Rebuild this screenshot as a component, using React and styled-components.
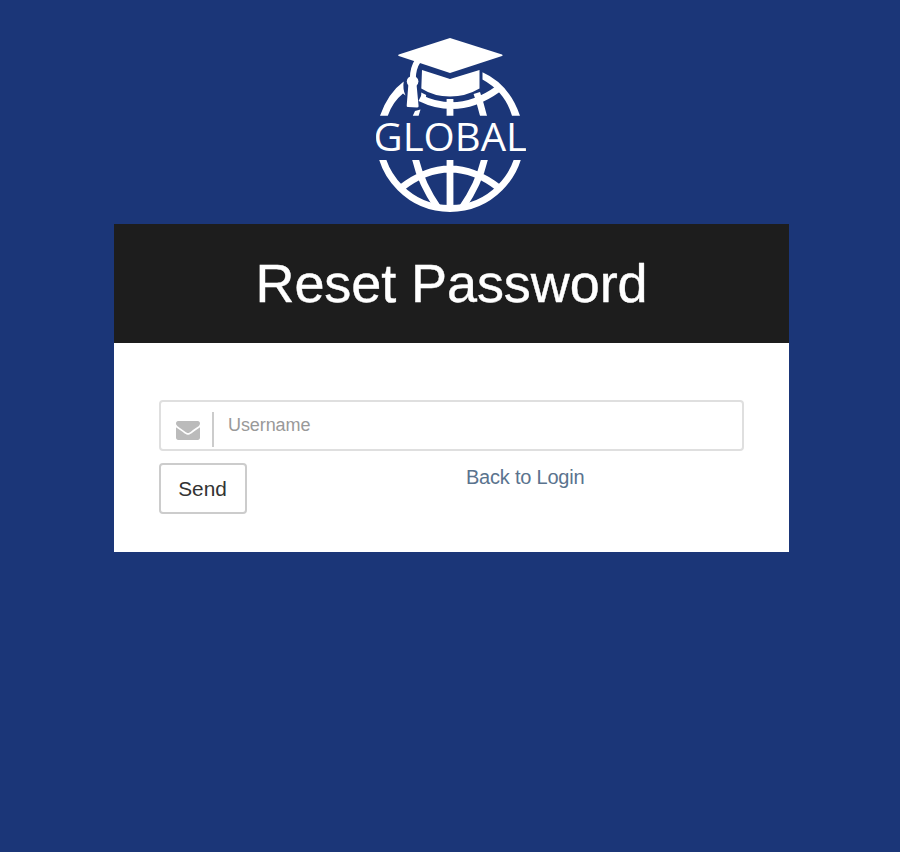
import React from "react";
import styled, { createGlobalStyle } from "styled-components";

const GlobalStyle = createGlobalStyle`
  *, *::before, *::after { box-sizing: border-box; }
  html, body { margin: 0; min-height: 100%; background: #1b3678; }
  body { font-family: "Liberation Sans", Arial, sans-serif; color: #333; }
`;

const Page = styled.main`
  width: 675px;
  margin-left: 114px;
  padding-top: 36px;
`;

const Logo = styled.svg`
  display: block;
  width: 156px;
  height: 178px;
  margin: 0 auto 10px 259px;
`;

const LogoText = styled.text`
  font-family: "Open Sans", sans-serif;
  font-size: 39px;
  font-weight: 400;
  fill: #fff;
`;

const Header = styled.header`
  height: 119px;
  background: #1d1d1d;
  text-align: center;
`;

const Title = styled.h1`
  margin: 0;
  font-size: 54px;
  font-weight: 400;
  letter-spacing: -0.08px;
  line-height: 119px;
  color: #fff;
  -webkit-text-stroke: 0.4px #fff;
`;

const Form = styled.form`
  height: 209px;
  padding: 57px 45px 0;
  background: #fff;
`;

const Field = styled.label`
  display: flex;
  height: 51px;
  border: 2px solid #dfdfdf;
  border-radius: 4px;
`;

const FieldIcon = styled.span`
  width: 53px;
  height: 35px;
  margin-top: 10px;
  padding: 9px 0 0 15px;
  border-right: 2px solid #ccc;
`;

const Envelope = styled.svg`
  display: block;
  width: 24px;
  height: 19px;
  fill: #bbb;
`;

const Input = styled.input`
  flex: 1;
  height: 46px;
  padding: 0 14px;
  border: 0;
  outline: 0;
  background: transparent;
  font: 18px "Liberation Sans", Arial, sans-serif;
  letter-spacing: -0.08px;
  color: #555;
  &::placeholder { color: #999; opacity: 1; }
`;

const Actions = styled.div`
  display: grid;
  grid-template-columns: 307px 1fr;
  align-items: start;
  margin-top: 12px;
`;

const SendButton = styled.button`
  width: 88px;
  height: 51px;
  padding: 0 1px 0 0;
  border: 2px solid #ccc;
  border-radius: 4px;
  background: #fff;
  font: 20.8px "Liberation Sans", Arial, sans-serif;
  color: #333;
`;

const BackLink = styled.a`
  font-size: 20px;
  letter-spacing: -0.22px;
  line-height: 28px;
  color: #5a738e;
  text-decoration: none;
`;

function GlobalLogo() {
  return (
    <Logo viewBox="373 36 156 178" role="img" aria-label="Global">
      <defs>
        <clipPath id="lower"><rect x="373" y="160" width="156" height="54" /></clipPath>
        <clipPath id="upper"><rect x="373" y="36" width="156" height="79.7" /></clipPath>
        <clipPath id="word"><rect x="376" y="118" width="150" height="38" /></clipPath>
      </defs>
      <g fill="none" stroke="#fff" strokeWidth="6.8" clipPath="url(#lower)">
        <circle cx="450" cy="138" r="70.5" />
        <path d="M450 158V210M401 188Q450 150 499 188M414.800 156Q420 182 438 208M485.200 156Q480 182 462 208" />
      </g>
      <g fill="none" stroke="#fff" strokeWidth="6.8" clipPath="url(#upper)">
        <path d="M420 98Q459 117 498 89M450 99V120M476.800 93Q481 105 484.500 120" />
      </g>
      <g fill="#fff">
        <path d="M380 115.700Q388 93 403.700 81.500Q402.500 89 405.500 95.500L403 93.500Q392.500 102 387.800 115.700Z" />
        <path d="M482.500 72.300Q509 84 520 115.700H512Q505 92 482.500 79.500Z" />
        <path d="M421.300 92.500L426.200 95L425 103L421 101Z" />
        <path d="M415 111L420.500 109.500L418.600 115.700H412.800Z" />
        <path d="M450 38L502 54.500Q503.500 55.300 502 56L450 73L398.800 56Q397.200 55.300 398.800 54.500Z" />
        <path d="M422 70L450 79L479.500 70V88.500Q466 96.500 450 96.500Q434 96.500 421.300 88.500Z" />
        <ellipse cx="412.600" cy="81.400" rx="5.800" ry="5.400" />
        <path d="M408.400 84H416.500L418.600 106.300Q418.600 107.500 417 107.500L408 107Q406.500 107 406.700 105.500Z" />
      </g>
      <path d="M412.800 79Q412.800 68 418.300 60" fill="none" stroke="#fff" strokeWidth="6" />
      <g clipPath="url(#word)">
        <LogoText x="373.500" y="151.200" textLength="153.500" lengthAdjust="spacingAndGlyphs">GLOBAL</LogoText>
      </g>
    </Logo>
  );
}

export default function App() {
  return (
    <>
      <GlobalStyle />
      <Page>
        <GlobalLogo />
        <Header><Title>Reset Password</Title></Header>
        <Form onSubmit={(event) => event.preventDefault()}>
          <Field>
            <FieldIcon>
              <Envelope viewBox="0 0 1792 1408" preserveAspectRatio="none" aria-hidden="true">
                <path d="M1792 454v794q0 66-47 113t-113 47H160q-66 0-113-47T0 1248V454q44 49 101 87 362 246 497 345 57 42 92.500 65.500t94.500 48 110 24.500h2q51 0 110-24.500t94.500-48T1194 886q170-123 498-345 57-39 100-87zm0-294q0 79-49 151t-122 123q-376 261-468 325-10 7-42.500 30.500t-54 38-52 32.500-57.500 27-50 9h-2q-23 0-50-9t-57.500-27-52-32.500-54-38T639 759q-91-64-262-182.500T172 434q-62-42-117-115.500T0 182q0-78 41.500-130T160 0h1472q65 0 112.500 47t47.500 113z" />
              </Envelope>
            </FieldIcon>
            <Input placeholder="Username" aria-label="Username" />
          </Field>
          <Actions>
            <SendButton type="submit">Send</SendButton>
            <BackLink href="#">Back to Login</BackLink>
          </Actions>
        </Form>
      </Page>
    </>
  );
}
